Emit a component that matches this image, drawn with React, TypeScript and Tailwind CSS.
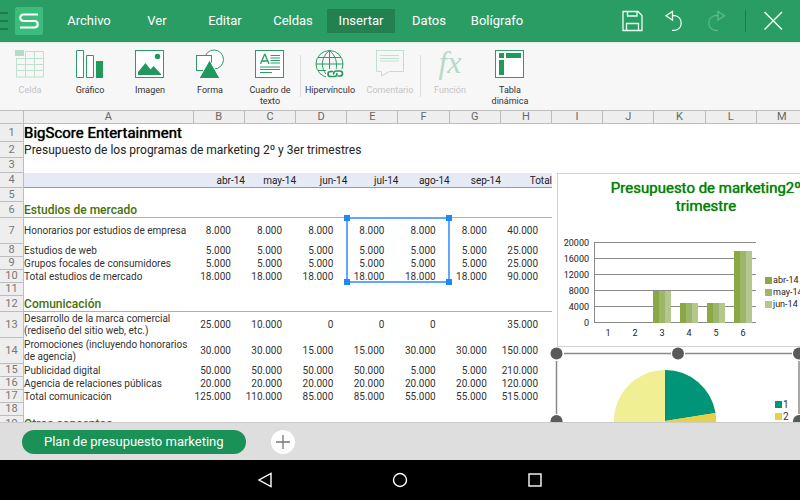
import type { ReactNode } from "react";

const MENU = ["Archivo", "Ver", "Editar", "Celdas", "Insertar", "Datos", "Bolígrafo"];

const COLUMNS = ["A", "B", "C", "D", "E", "F", "G", "H", "I", "J", "K", "L", "M"];

type RowKind = "title" | "subtitle" | "months" | "section" | "data" | "empty";

type Row = {
  kind: RowKind;
  height: string;
  label?: string;
  values?: string[];
};

const ROWS: Row[] = [
  { kind: "title", height: "h-[18px]", label: "BigScore Entertainment" },
  {
    kind: "subtitle",
    height: "h-[16px]",
    label: "Presupuesto de los programas de marketing 2º y 3er trimestres",
  },
  { kind: "empty", height: "h-[15px]" },
  {
    kind: "months",
    height: "h-[15px]",
    values: ["abr-14", "may-14", "jun-14", "jul-14", "ago-14", "sep-14", "Total"],
  },
  { kind: "empty", height: "h-[14px]" },
  { kind: "section", height: "h-[16px]", label: "Estudios de mercado" },
  {
    kind: "data",
    height: "h-[26px]",
    label: "Honorarios por estudios de empresa",
    values: ["8.000", "8.000", "8.000", "8.000", "8.000", "8.000", "40.000"],
  },
  {
    kind: "data",
    height: "h-[13px]",
    label: "Estudios de web",
    values: ["5.000", "5.000", "5.000", "5.000", "5.000", "5.000", "25.000"],
  },
  {
    kind: "data",
    height: "h-[13px]",
    label: "Grupos focales de consumidores",
    values: ["5.000", "5.000", "5.000", "5.000", "5.000", "5.000", "25.000"],
  },
  {
    kind: "data",
    height: "h-[13px]",
    label: "Total estudios de mercado",
    values: ["18.000", "18.000", "18.000", "18.000", "18.000", "18.000", "90.000"],
  },
  { kind: "empty", height: "h-[13px]" },
  { kind: "section", height: "h-[16px]", label: "Comunicación" },
  {
    kind: "data",
    height: "h-[26px]",
    label: "Desarrollo de la marca comercial (rediseño del sitio web, etc.)",
    values: ["25.000", "10.000", "0", "0", "0", "", "35.000"],
  },
  {
    kind: "data",
    height: "h-[26px]",
    label: "Promociones (incluyendo honorarios de agencia)",
    values: ["30.000", "30.000", "15.000", "15.000", "30.000", "30.000", "150.000"],
  },
  {
    kind: "data",
    height: "h-[13px]",
    label: "Publicidad digital",
    values: ["50.000", "50.000", "50.000", "50.000", "5.000", "5.000", "210.000"],
  },
  {
    kind: "data",
    height: "h-[13px]",
    label: "Agencia de relaciones públicas",
    values: ["20.000", "20.000", "20.000", "20.000", "20.000", "20.000", "120.000"],
  },
  {
    kind: "data",
    height: "h-[13px]",
    label: "Total comunicación",
    values: ["125.000", "110.000", "85.000", "85.000", "55.000", "55.000", "515.000"],
  },
  { kind: "empty", height: "h-[13px]" },
  { kind: "section", height: "h-[16px]", label: "Otros conceptos" },
];

const LABEL_STYLE: Record<RowKind, string> = {
  title: "text-[15px] leading-4 text-black whitespace-nowrap text-shadow-[0_0_1px_#000]",
  subtitle: "text-[12px] leading-[14px] text-[#222] whitespace-nowrap",
  months: "bg-[#e6eaf6] border-b border-[#6fa3d8]",
  section:
    "text-[12px] leading-[14px] font-medium text-[#47700a] border-b border-[#8fb6dc] whitespace-nowrap",
  data: "text-[10px] leading-3 text-[#333]",
  empty: "",
};

const VALUE_STYLE: Record<RowKind, string> = {
  title: "",
  subtitle: "",
  months: "align-bottom text-[10px] leading-3 text-[#222] bg-[#e6eaf6] border-b border-[#6fa3d8]",
  section: "border-b border-[#8fb6dc]",
  data: "align-middle pr-[14px] text-[10px] leading-3 text-[#333]",
  empty: "",
};

function Icon({ children }: { children: ReactNode }) {
  return (
    <svg viewBox="0 0 30 30" fill="none" stroke="#2a9d64" className="size-[30px]" aria-hidden="true">
      {children}
    </svg>
  );
}

const TOOLS: { label: string; disabled?: boolean; divider?: boolean; icon: ReactNode }[] = [
  {
    label: "Celda",
    disabled: true,
    icon: (
      <Icon>
        <g stroke="#bfe0cf">
          <path d="M10.5 2.500H28.500V28H1.500V9M1 9.500H28.500M1.500 15.500H28.500M1.500 21.500H28.500M10.500 2.500V28M19.500 2.500V28" />
          <rect x="0" y="1" width="9" height="6" fill="#b5dbc8" stroke="none" />
        </g>
      </Icon>
    ),
  },
  {
    label: "Gráfico",
    icon: (
      <Icon>
        <path d="M1.500 1.500H8.500V28.500H1.500ZM11.500 6.500H18.500V28.500H11.500Z" fill="#fff" />
        <rect x="21" y="12" width="7" height="17" fill="#1f9a5c" stroke="none" />
      </Icon>
    ),
  },
  {
    label: "Imagen",
    icon: (
      <Icon>
        <rect x="0.500" y="1.500" width="28" height="27" fill="#fff" />
        <circle cx="22.500" cy="7.500" r="2.700" fill="#1f9a5c" stroke="none" />
        <path d="M3 26V23L10.500 14L15.500 20.500L18.500 17L26 25V26Z" fill="#1f9a5c" stroke="none" />
      </Icon>
    ),
  },
  {
    label: "Forma",
    icon: (
      <Icon>
        <circle cx="19" cy="10.500" r="9.500" fill="#fff" />
        <rect x="1.500" y="6.500" width="15" height="15" fill="#fff" />
        <path d="M14.500 11L25 29.500H4Z" fill="#1f9a5c" stroke="#f7f7f7" />
      </Icon>
    ),
  },
  {
    label: "Cuadro de texto",
    divider: true,
    icon: (
      <Icon>
        <rect x="0.500" y="1.500" width="28" height="27" fill="#fff" />
        <path d="M5.500 15L9.500 5.500H10L14 15M7 12H12.500" strokeWidth="1.300" />
        <path d="M15.500 6.500H25M15.500 9H25M15.500 11.500H25M15.500 14H25M5 18H25M5 20.500H25M5 23.500H17" />
      </Icon>
    ),
  },
  {
    label: "Hipervínculo",
    icon: (
      <Icon>
        <circle cx="14.500" cy="15" r="13.500" />
        <path d="M14.500 1.500V21M14.500 1.500C5 9 5 21 14.500 28.500M14.500 1.500C21 7 22.500 14 21 21M3 8.500H26M1 15H28M3 21.500H14" />
        <rect x="11" y="20" width="18" height="9" fill="#f7f7f7" stroke="none" />
        <path
          d="M18 22.500H15.500A2.300 2.300 0 0 0 15.500 27.500H19.500A2.300 2.300 0 0 0 21.500 24M22.500 27H25A2.300 2.300 0 0 0 25 22H21A2.300 2.300 0 0 0 19 25.500"
          stroke="#1f9a5c"
          strokeWidth="1.700"
        />
      </Icon>
    ),
  },
  {
    label: "Comentario",
    disabled: true,
    divider: true,
    icon: (
      <Icon>
        <path d="M1.500 1.500H28.500V22.500H14.500L6.500 27V22.500H1.500ZM5 6.500H24M5 9.500H24M5 12H24" stroke="#bfe0cf" />
      </Icon>
    ),
  },
  {
    label: "Función",
    disabled: true,
    icon: (
      <span className="h-[30px] font-['Liberation_Serif',serif] text-[32px] leading-[26px] text-[#b5dbc8] italic">
        fx
      </span>
    ),
  },
  {
    label: "Tabla dinámica",
    icon: (
      <Icon>
        <rect x="0.500" y="1.500" width="28" height="27" fill="#fff" />
        <path d="M4 4H9V9H4ZM11 4H26V9H11ZM4 11H9V26H4Z" fill="#1f9a5c" stroke="none" />
      </Icon>
    ),
  },
];

function TopBar() {
  return (
    <header className="flex h-[42px] shrink-0 items-center bg-[#2a9d64] text-white">
      <button aria-label="Menú" className="flex w-2 flex-col gap-[6px]">
        <span className="h-[2px] bg-[#1f7a4c]" />
        <span className="h-[2px] bg-[#1f7a4c]" />
        <span className="h-[2px] bg-[#1f7a4c]" />
      </button>
      <svg viewBox="0 0 28 28" className="mr-3 ml-[7px] size-7" aria-hidden="true">
        <rect width="28" height="28" rx="2" fill="#3dbd7b" />
        <path
          d="M23 7.500H8.500A3.200 3.200 0 0 0 8.500 14H20A3.300 3.300 0 0 1 20 20.500H5"
          fill="none"
          stroke="#fff"
          strokeWidth="2.200"
        />
      </svg>
      <nav className="flex">
        {MENU.map((item) => (
          <button
            key={item}
            className={`h-6 w-[68px] text-[13px] leading-4 ${item === "Insertar" ? "rounded-[1px] bg-[#228051]" : ""}`}
          >
            {item}
          </button>
        ))}
      </nav>
      <div className="ml-auto flex items-center pr-4">
        <button aria-label="Guardar" className="mr-5">
          <svg viewBox="0 0 22 22" className="size-[22px]" fill="none" stroke="#eafff3" strokeWidth="1.300">
            <path d="M2 1.500H17L21 5.500V20.500H2ZM6.500 1.500V6H16V1.500M5.500 20.500V13.500H17.500V20.500" />
          </svg>
        </button>
        <button aria-label="Deshacer" className="mr-5">
          <svg viewBox="0 0 22 22" className="size-[22px]" fill="none" stroke="#eafff3" strokeWidth="1.300">
            <path d="M9.500 1.500V10L3 5.700ZM9.500 5.700H12A7.400 7.400 0 0 1 12 20.300H9" />
          </svg>
        </button>
        <button aria-label="Rehacer" className="mr-[18px]" disabled>
          <svg viewBox="0 0 22 22" className="size-[22px]" fill="none" stroke="#5fb98b" strokeWidth="1.300">
            <path d="M13 1.500V10L19.500 5.700ZM13 5.700H10A7.400 7.400 0 0 0 10 20.300H13" />
          </svg>
        </button>
        <span className="mr-4 h-[22px] w-px bg-[#1f7a4c]" />
        <button aria-label="Cerrar">
          <svg viewBox="0 0 22 22" className="size-[22px]" fill="none" stroke="#eafff3" strokeWidth="1.500">
            <path d="M2.500 2L20 19.500M20 2L2.500 19.500" />
          </svg>
        </button>
      </div>
    </header>
  );
}

function Toolbar() {
  return (
    <div className="flex h-[68px] shrink-0 border-t border-[#e2ebe6] bg-[#f7f7f7]">
      {TOOLS.map((tool) => (
        <div key={tool.label} className="relative flex">
          <button
            disabled={tool.disabled}
            className={`flex w-[60px] flex-col items-center gap-[6px] pt-[6px] text-[9px] leading-[11px] ${
              tool.disabled ? "text-[#c4c4c4]" : "text-[#333]"
            }`}
          >
            {tool.icon}
            <span className="px-1">{tool.label}</span>
          </button>
          {tool.divider && <span className="absolute top-3 -right-px h-[42px] w-px bg-[#dcdcdc]" />}
        </div>
      ))}
    </div>
  );
}

function Grid() {
  return (
    <table className="w-[808px] table-fixed border-separate border-spacing-0">
      <colgroup>
        <col className="w-[24px]" />
        <col className="w-[169px]" />
        {COLUMNS.slice(1).map((c) => (
          <col key={c} className="w-[51px]" />
        ))}
      </colgroup>
      <thead>
        <tr className="h-[14px] bg-[#eeeeee] text-[11px] leading-3 text-[#666]">
          <th className="border border-l-0 border-[#bdbdbd] p-0" />
          {COLUMNS.map((c) => (
            <th key={c} scope="col" className="border-y border-r border-[#bdbdbd] p-0 font-normal">
              {c}
            </th>
          ))}
        </tr>
      </thead>
      <tbody>
        {ROWS.map((row, i) => (
          <tr key={i} className={row.height}>
            <th
              scope="row"
              className="border-r border-b border-[#bdbdbd] bg-[#eeeeee] p-0 text-[11px] leading-3 font-normal text-[#777]"
            >
              {i + 1}
            </th>
            <td className={`p-0 align-middle ${LABEL_STYLE[row.kind]}`}>{row.label}</td>
            {COLUMNS.slice(1, 8).map((c, j) => (
              <td key={c} className={`p-0 text-right ${VALUE_STYLE[row.kind]}`}>
                {row.values?.[j]}
              </td>
            ))}
            <td colSpan={5} className="p-0" />
          </tr>
        ))}
      </tbody>
    </table>
  );
}

function Selection() {
  return (
    <div className="pointer-events-none absolute top-[107px] left-[346px] h-[66px] w-[104px] border-2 border-[#5fa8fb]">
      <span className="absolute -top-1 -left-1 size-[6px] bg-[#1e88ff]" />
      <span className="absolute -top-1 -right-1 size-[6px] bg-[#1e88ff]" />
      <span className="absolute -bottom-1 -left-1 size-[6px] bg-[#1e88ff]" />
      <span className="absolute -right-1 -bottom-1 size-[6px] bg-[#1e88ff]" />
    </div>
  );
}

const BARS = [0, 0, 8000, 5000, 5000, 18000];
const SERIES = [
  { name: "abr-14", color: "#8aa843" },
  { name: "may-14", color: "#9cb76c" },
  { name: "jun-14", color: "#b4c78c" },
];

function BarChart() {
  const y = (v: number) => 150 - (v * 80) / 20000;
  return (
    <figure className="absolute top-[63px] left-[557px] h-[174px] w-[298px] border border-[#d2d2d2] bg-white">
      <figcaption className="px-10 pt-[5px] text-center text-[15px] leading-[18px] text-[#0a7f0a] text-shadow-[0_0_1px_#0a7f0a]">
        Presupuesto de marketing2º
        <br />
        trimestre
      </figcaption>
      <svg viewBox="0 0 296 172" className="absolute inset-0 h-[172px] w-[296px] text-[9px]" fill="#222">
        {[0, 4000, 8000, 12000, 16000, 20000].map((v) => (
          <g key={v}>
            <path d={`M36 ${y(v) - 1.5}H198`} stroke="#8a8a8a" />
            <text x="31" y={y(v) + 2} textAnchor="end">
              {v}
            </text>
          </g>
        ))}
        <path d="M36.500 68V149" stroke="#8a8a8a" />
        {BARS.map((v, i) => (
          <g key={i}>
            {SERIES.map((s, j) => (
              <rect key={s.name} x={41 + i * 27 + j * 6} y={y(v) - 1} width="6" height={150 - y(v)} fill={s.color} />
            ))}
            <text x={50 + i * 27} y="162" textAnchor="middle">
              {i + 1}
            </text>
          </g>
        ))}
        {SERIES.map((s, i) => (
          <g key={s.name}>
            <rect x="207" y={103 + i * 12} width="7" height="7" fill={s.color} />
            <text x="215" y={109 + i * 12}>
              {s.name}
            </text>
          </g>
        ))}
      </svg>
    </figure>
  );
}

function PieChart() {
  return (
    <svg
      viewBox="0 0 256 150"
      className="absolute top-[236px] left-[550px] h-[150px] w-[256px] text-[10px]"
      fill="#333"
      role="img"
      aria-label="Gráfico circular"
    >
      <rect x="7" y="8" width="243" height="136" fill="#fff" />
      <path d="M14 7.500H121M135 7.500H242M6.500 15V68M249 15V68" stroke="#8a8a8a" strokeWidth="1.500" />
      <circle cx="115" cy="75" r="51" fill="#f0ef93" />
      <path d="M115 75V24A51 51 0 0 1 165.500 67Z" fill="#009578" />
      <path d="M115 75L165.500 67A51 51 0 0 1 115 126Z" fill="#e8d14a" />
      <rect x="225" y="55" width="7" height="7" fill="#009578" />
      <text x="233" y="62">1</text>
      <rect x="225" y="67" width="7" height="7" fill="#e8d14a" />
      <text x="233" y="74">2</text>
      {[6.5, 128, 249].map((x) => (
        <circle key={x} cx={x} cy="7.500" r="6" fill="#5a5a5a" />
      ))}
      {[6.5, 249].map((x) => (
        <circle key={x} cx={x} cy="75" r="6" fill="#5a5a5a" />
      ))}
    </svg>
  );
}

function SheetTabs() {
  return (
    <div className="flex h-[38px] shrink-0 items-center gap-[25px] border-t border-[#cccccc] bg-[#dedede] pl-[22px]">
      <button className="h-6 rounded-full bg-[#1a9157] px-[22px] text-[13px] leading-4 text-white">
        Plan de presupuesto marketing
      </button>
      <button aria-label="Añadir hoja" className="flex size-6 items-center justify-center rounded-full bg-white">
        <svg viewBox="0 0 14 14" className="size-[14px]" stroke="#777" strokeWidth="1.300">
          <path d="M7 0V14M0 7H14" />
        </svg>
      </button>
    </div>
  );
}

function SystemNav() {
  return (
    <nav className="flex h-10 shrink-0 items-center justify-center gap-[119px] bg-black">
      <button aria-label="Atrás">
        <svg viewBox="0 0 16 16" className="size-4" fill="none" stroke="#fff" strokeWidth="1.400">
          <path d="M14 1.500V14.500L2 8Z" />
        </svg>
      </button>
      <button aria-label="Inicio">
        <svg viewBox="0 0 16 16" className="size-4" fill="none" stroke="#fff" strokeWidth="1.400">
          <circle cx="8" cy="8" r="6.500" />
        </svg>
      </button>
      <button aria-label="Recientes">
        <svg viewBox="0 0 16 16" className="size-4" fill="none" stroke="#fff" strokeWidth="1.400">
          <rect x="2" y="2" width="12" height="12" />
        </svg>
      </button>
    </nav>
  );
}

export default function App() {
  return (
    <div className="flex h-screen flex-col overflow-hidden bg-white font-[Roboto,sans-serif]">
      <TopBar />
      <Toolbar />
      <main className="relative min-h-0 flex-1 overflow-hidden">
        <Grid />
        <Selection />
        <BarChart />
        <PieChart />
      </main>
      <SheetTabs />
      <SystemNav />
    </div>
  );
}
